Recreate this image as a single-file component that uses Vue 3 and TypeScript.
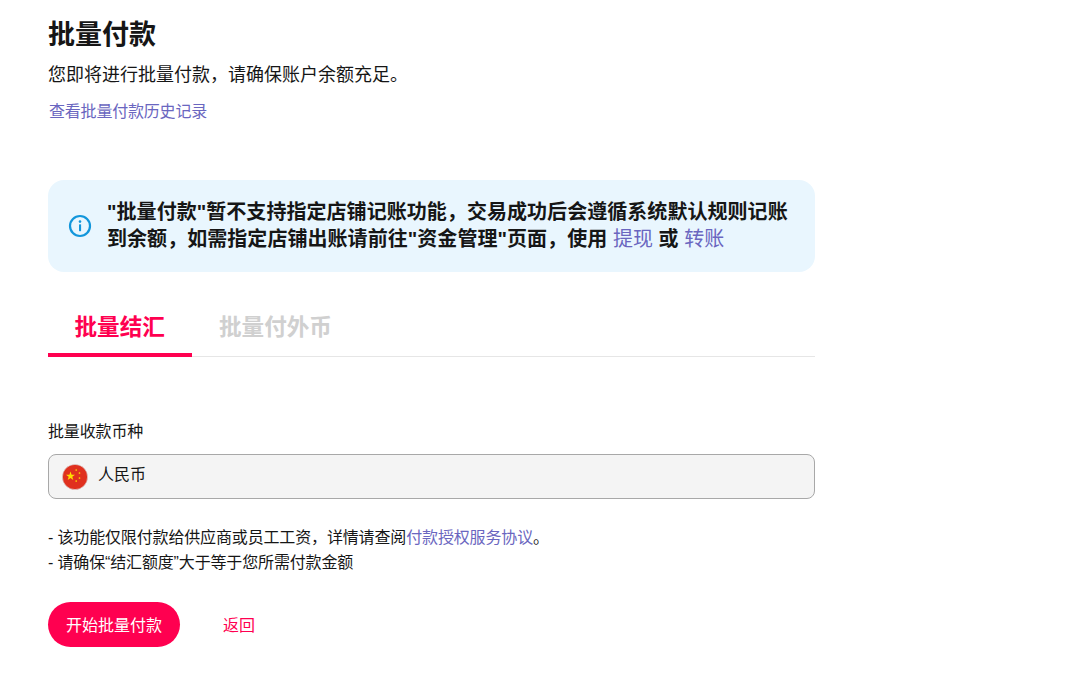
<script setup lang="ts">
const title = '批量付款'
</script>

<template>
  <main class="page">
    <h1 class="title">{{ title }}</h1>
    <p class="sub">您即将进行批量付款，请确保账户余额充足。</p>
    <a class="link history">查看批量付款历史记录</a>

    <div class="notice">
      <svg class="info" width="24" height="24" viewBox="0 0 24 24" fill="none">
        <circle cx="12" cy="12" r="10" stroke="#1296db" stroke-width="2.2" />
        <circle cx="12" cy="7.6" r="1.3" fill="#1296db" />
        <rect x="11" y="10.2" width="2.1" height="7" rx="0.6" fill="#1296db" />
      </svg>
      <div class="notice-text">
        "批量付款"暂不支持指定店铺记账功能，交易成功后会遵循系统默认规则记账到余额，如需指定店铺出账请前往"资金管理"页面，使用 <a class="link plain">提现</a> 或 <a class="link plain">转账</a>
      </div>
    </div>

    <div class="tabs">
      <div class="tab active">批量结汇</div>
      <div class="tab">批量付外币</div>
    </div>

    <label class="label">批量收款币种</label>
    <div class="select">
      <svg class="flag" width="26" height="26" viewBox="0 0 26 26">
        <circle cx="13" cy="13" r="12.6" fill="#e0301e" stroke="#d9d9d9" stroke-width="0.6" />
        <polygon points="8.5,7.5 9.6,10.7 13,10.7 10.3,12.8 11.3,16 8.5,14.1 5.7,16 6.7,12.8 4,10.7 7.4,10.7" fill="#ffde00" />
        <circle cx="14.2" cy="6" r="0.85" fill="#ffde00" />
        <circle cx="17.5" cy="9" r="0.85" fill="#ffde00" />
        <circle cx="17.5" cy="14" r="0.85" fill="#ffde00" />
        <circle cx="14.2" cy="17" r="0.85" fill="#ffde00" />
      </svg>
      <span class="select-text">人民币</span>
    </div>

    <div class="notes">
      <div>- 该功能仅限付款给供应商或员工工资，详情请查阅<a class="link">付款授权服务协议</a>。</div>
      <div>- 请确保“结汇额度”大于等于您所需付款金额</div>
    </div>

    <div class="actions">
      <button class="primary" type="button">开始批量付款</button>
      <button class="back" type="button">返回</button>
    </div>
  </main>
</template>

<style>
html, body { margin: 0; background: #fff; }
</style>

<style scoped>
.page {
  width: 767px;
  margin-left: 48px;
  padding-top: 16px;
  color: #161823;
  font-family: "Liberation Sans", "Noto Sans CJK SC", sans-serif;
}
.title {
  margin: 0;
  font-size: 27px;
  line-height: 38px;
  font-weight: 700;
  color: #161616;
}
.sub {
  margin: 8px 0 0;
  font-size: 18px;
  line-height: 26px;
  color: #161616;
}
.link { color: #6a66c0; text-decoration: none; }
.history {
  display: block;
  margin: 12px 0 0 1px;
  font-size: 16px;
  line-height: 24px;
  letter-spacing: -0.2px;
}
.notice {
  display: flex;
  align-items: center;
  margin-top: 56px;
  height: 92px;
  box-sizing: border-box;
  padding: 0 20px;
  background: #e9f6fe;
  border-radius: 16px;
}
.info { flex: none; margin-right: 15px; }
.notice-text {
  font-size: 20px;
  line-height: 27px;
  font-weight: 700;
  color: #161616;
  letter-spacing: 0.05px;
}
.plain { font-weight: 400; }
.tabs {
  display: flex;
  margin-top: 32px;
  border-bottom: 1px solid #e6e6e6;
  height: 52px;
}
.tab {
  box-sizing: border-box;
  height: 53px;
  padding: 8px 26px 0 27px;
  font-size: 22.6px;
  line-height: 32px;
  font-weight: 700;
  white-space: nowrap;
  color: #d0d0d0;
}
.active {
  width: 144px;
  padding-left: 26.5px;
  color: #ff0050;
  border-bottom: 4px solid #ff0050;
}
.label {
  display: block;
  margin-top: 64px;
  font-size: 16px;
  line-height: 22px;
  letter-spacing: -0.15px;
  color: #161616;
}
.select {
  display: flex;
  align-items: center;
  gap: 10px;
  margin-top: 11px;
  height: 45px;
  box-sizing: border-box;
  padding-left: 13px;
  border: 1px solid #a8a8a8;
  border-radius: 8px;
  background: #f4f4f4;
  font-size: 16px;
  color: #161616;
}
.select-text { line-height: 22px; margin-bottom: 4px; }
.flag { flex: none; }
.notes {
  margin-top: 26px;
  font-size: 16px;
  line-height: 25px;
  letter-spacing: -0.15px;
  color: #161616;
}
.actions {
  display: flex;
  align-items: center;
  margin-top: 27px;
}
.primary {
  width: 132px;
  height: 45px;
  padding: 0 0 2px;
  border: 0;
  border-radius: 23px;
  background: #ff0050;
  color: #fff;
  font: inherit;
  font-size: 16px;
  cursor: pointer;
}
.back {
  margin-left: 43px;
  padding: 0 0 2px;
  border: 0;
  background: none;
  color: #ff0050;
  font: inherit;
  font-size: 16px;
  cursor: pointer;
}
</style>
